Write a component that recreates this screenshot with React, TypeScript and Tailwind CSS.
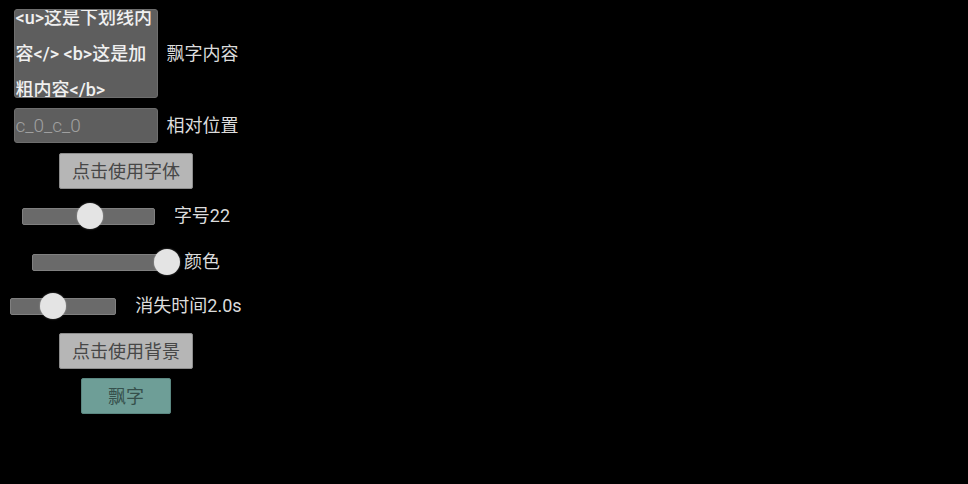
import React from "react";

const font = { fontFamily: 'Roboto, "Noto Sans CJK SC", "Noto Sans", sans-serif' };

function Slider({ width, pos, label }: { width: number; pos: number; label: string }) {
  return (
    <div className="flex h-[30px] items-center gap-[19px]">
      <div className="relative h-[17px] rounded-[2px] border border-[#808080] bg-[#6a6a6a]" style={{ width }}>
        <div
          className="absolute top-1/2 h-[26px] w-[26px] -translate-x-1/2 -translate-y-1/2 rounded-full bg-[#e4e4e4] shadow-[0_0_2px_rgba(255,255,255,0.4)]"
          style={{ left: pos }}
        />
      </div>
      <span className="text-[18px] leading-none text-[#dcdcdc]">{label}</span>
    </div>
  );
}

export default function App() {
  return (
    <div className="min-h-[484px] w-full bg-black" style={font}>
      <div className="flex w-[252px] flex-col items-center">
        <div className="mt-[9px] flex items-center gap-[9px]">
          <div className="h-[89px] w-[144px] overflow-hidden rounded-[3px] border border-[#6e6e6e] bg-[#5e5e5e] pl-[1px] pr-[2px]">
            <div className="-mt-[10px] break-all text-[18px] font-medium leading-[36px] text-[#f0f0f0]">
              &lt;u&gt;这是下划线内容&lt;/&gt; &lt;b&gt;这是加粗内容&lt;/b&gt;
            </div>
          </div>
          <span className="text-[18px] leading-none text-[#dcdcdc]">飘字内容</span>
        </div>
        <div className="mt-[10px] flex items-center gap-[9px]">
          <div className="flex h-[35px] w-[144px] items-center rounded-[3px] border border-[#6e6e6e] bg-[#5e5e5e] pl-[1px]">
            <span className="text-[19px] font-light leading-none text-[#a0a0a0]">c_0_c_0</span>
          </div>
          <span className="text-[18px] leading-none text-[#dcdcdc]">相对位置</span>
        </div>
        <button className="mt-[10px] flex h-[36px] w-[134px] items-center justify-center rounded-[2px] border border-[#8c8c8c] bg-[#b6b6b6] text-[18px] text-[#474747]">
          点击使用字体
        </button>
        <div className="mt-[12px]">
          <Slider width={133} pos={67} label="字号22" />
        </div>
        <div className="mt-[16px]">
          <Slider width={133} pos={134} label="颜色" />
        </div>
        <div className="mt-[14px]">
          <Slider width={106} pos={42} label="消失时间2.0s" />
        </div>
        <button className="mt-[12px] flex h-[36px] w-[134px] items-center justify-center rounded-[2px] border border-[#8c8c8c] bg-[#b6b6b6] text-[18px] text-[#474747]">
          点击使用背景
        </button>
        <button className="mt-[9px] flex h-[36px] w-[90px] items-center justify-center rounded-[2px] border border-[#5b8781] bg-[#6e9e97] text-[18px] text-[#36504c]">
          飘字
        </button>
      </div>
    </div>
  );
}
